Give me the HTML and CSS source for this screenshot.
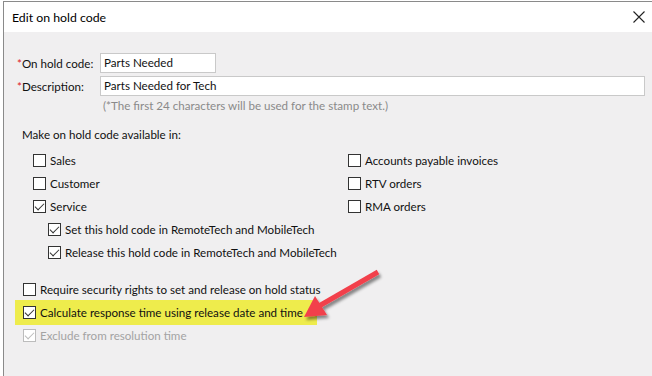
FILE: index.html
```html
<!DOCTYPE html>
<html lang="en">
<head>
  <meta charset="utf-8">
  <title>Edit on hold code</title>
  <link rel="stylesheet" href="styles.css">
</head>
<body>
  <div class="backdrop">
    <div class="dialog">
      <div class="titlebar">
        <span class="title">Edit on hold code</span>
        <svg class="close" width="12" height="12" viewBox="0 0 12 12">
          <path d="M0.5 0.5 L11.5 11.5 M11.5 0.5 L0.5 11.5" stroke="#222" stroke-width="1.1" fill="none"/>
        </svg>
      </div>

      <div class="content">
        <div class="field">
          <label class="field__label"><span class="req">*</span>On hold code:</label>
          <div class="input input--short">Parts Needed</div>
        </div>
        <div class="field">
          <label class="field__label"><span class="req">*</span>Description:</label>
          <div class="input input--long">Parts Needed for Tech</div>
        </div>
        <p class="hint">(*The first 24 characters will be used for the stamp text.)</p>

        <p class="section">Make on hold code available in:</p>

        <div class="options">
          <ul class="col col--left">
            <li class="opt"><span class="box"></span>Sales</li>
            <li class="opt"><span class="box"></span>Customer</li>
            <li class="opt"><span class="box box--on"></span>Service</li>
            <li class="opt opt--sub"><span class="box box--on"></span>Set this hold code in RemoteTech and MobileTech</li>
            <li class="opt opt--sub"><span class="box box--on"></span>Release this hold code in RemoteTech and MobileTech</li>
          </ul>
          <ul class="col col--right">
            <li class="opt"><span class="box"></span>Accounts payable invoices</li>
            <li class="opt"><span class="box"></span>RTV orders</li>
            <li class="opt"><span class="box"></span>RMA orders</li>
          </ul>
        </div>

        <ul class="extras">
          <li class="opt"><span class="box"></span>Require security rights to set and release on hold status</li>
          <li class="opt opt--marked"><span class="box box--on"></span>Calculate response time using release date and time</li>
          <li class="opt opt--disabled"><span class="box box--on"></span>Exclude from resolution time</li>
        </ul>
      </div>
    </div>

    <svg class="arrow" width="100" height="70" viewBox="0 0 100 70">
      <defs>
        <filter id="shadow" x="-20%" y="-20%" width="150%" height="150%">
          <feDropShadow dx="2" dy="3" stdDeviation="1.5" flood-color="#000" flood-opacity="0.45"/>
        </filter>
      </defs>
      <g filter="url(#shadow)">
        <line x1="78" y1="10" x2="19" y2="44" stroke="#f2404b" stroke-width="5"/>
        <polygon points="4,55 15,34 27,53" fill="#f2404b"/>
      </g>
    </svg>
  </div>
</body>
</html>
```

FILE: styles.css
```css
body {
  margin: 0;
  background-color: #fff;
  font-family: Lato, "Open Sans", sans-serif;
  font-size: 11.6px;
  color: #111;
}

ul {
  list-style-type: none;
  margin: 0;
  padding: 0;
}

p {
  margin: 0;
}

.backdrop {
  position: relative;
  height: 376px;
  overflow: hidden;
  padding-top: 1px;
  padding-left: 3px;
}

.dialog {
  height: 380px;
  border-top: 1px solid #8a8a8a;
  border-left: 1px solid #8a8a8a;
  background-color: #f0eff0;
}

.titlebar {
  display: flex;
  align-items: center;
  justify-content: space-between;
  height: 30px;
  padding: 0 7px 0 8px;
  background-color: #fff;
}

.title {
  font-size: 12.3px;
  color: #000;
}

.close {
  margin-top: -1px;
}

.content {
  padding: 21px 7px 0 13px;
}

.field {
  display: flex;
  align-items: center;
  height: 20px;
  margin-bottom: 3px;
}

.field__label {
  width: 83px;
  flex: none;
}

.req {
  color: #e0201e;
}

.input {
  box-sizing: border-box;
  height: 20px;
  line-height: 18px;
  padding: 0 3px;
  border: 1px solid #c9c9c9;
  background-color: #fff;
}

.input--short {
  width: 116px;
}

.input--long {
  flex: 1;
}

.hint {
  margin-left: 86px;
  line-height: 16px;
  margin-top: -1px;
  color: #8a8a8a;
}

.section {
  margin: 13px 0 0 5px;
  line-height: 16px;
}

.options {
  display: grid;
  grid-template-columns: 315px 1fr;
  margin-top: 6px;
  padding-left: 16px;
}

.opt {
  display: flex;
  align-items: center;
  height: 23px;
  white-space: nowrap;
}

.opt--sub {
  padding-left: 15px;
}

.box {
  box-sizing: border-box;
  position: relative;
  width: 13px;
  height: 13px;
  margin-right: 4px;
  border: 1px solid #333;
  background-color: #fff;
  flex: none;
}

.box--on::after {
  content: "";
  position: absolute;
  left: 3px;
  top: 0px;
  width: 4px;
  height: 8px;
  border-right: 1.3px solid #333;
  border-bottom: 1.3px solid #333;
  transform: rotate(45deg);
}

.extras {
  margin-top: 14px;
  padding-left: 6px;
}

.opt--marked {
  width: 294px;
  height: 25px;
  margin: -1px 0 -1px -8px;
  padding-left: 8px;
  background-color: #eeec4c;
}

.opt--disabled {
  color: #a3a3a3;
}

.opt--disabled .box {
  border-color: #bcbcbc;
}

.opt--disabled .box--on::after {
  border-color: #bcbcbc;
}

.arrow {
  position: absolute;
  left: 300px;
  top: 262px;
}
```
